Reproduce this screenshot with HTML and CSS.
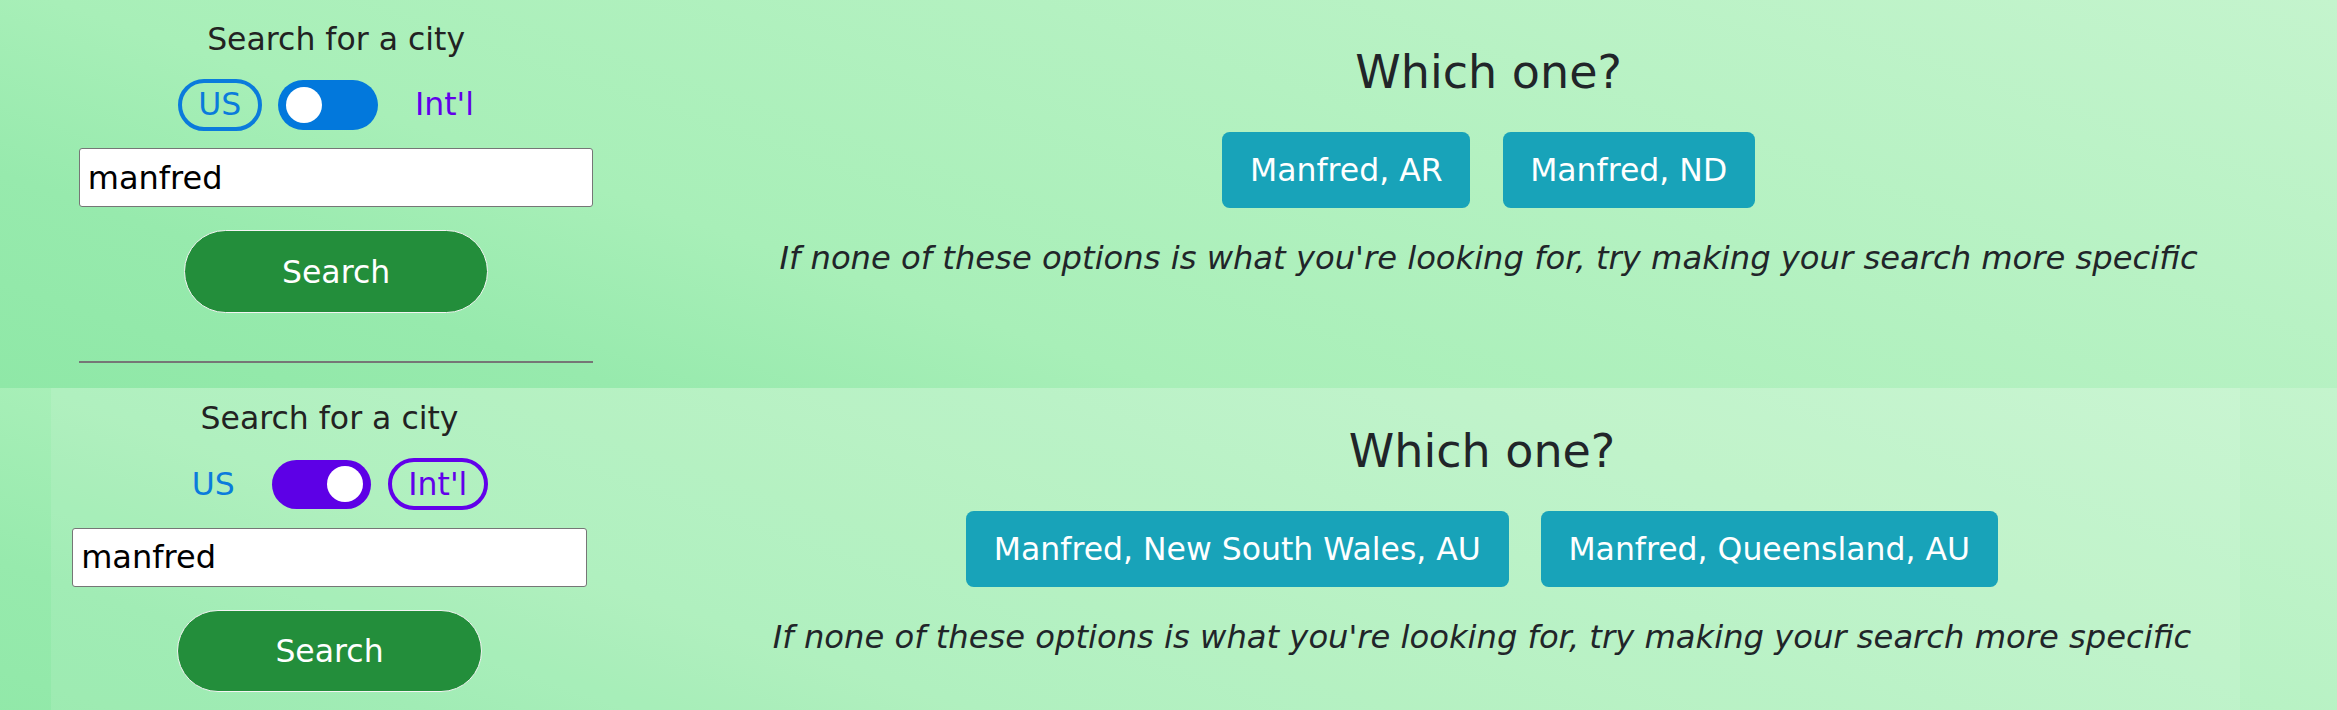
FILE: index.html
```html
<!DOCTYPE html>
<html lang="en">
<head>
<meta charset="utf-8">
<title>City search</title>
<link rel="stylesheet" href="styles.css">
</head>
<body>
<div class="page">
  <section class="result">
    <div class="search-col">
      <h5 class="search-title">Search for a city</h5>
      <div class="mode-row">
        <span class="mode mode-us is-active">US</span>
        <span class="switch switch-us"><span class="knob"></span></span>
        <span class="mode mode-intl">Int'l</span>
      </div>
      <input class="city-input" type="text" value="manfred">
      <button class="search-btn" type="button">Search</button>
      <hr class="divider">
    </div>
    <div class="choices-col">
      <h3 class="which">Which one?</h3>
      <div class="choices">
        <button class="choice" type="button">Manfred, AR</button>
        <button class="choice" type="button">Manfred, ND</button>
      </div>
      <p class="hint">If none of these options is what you're looking for, try making your search more specific</p>
    </div>
  </section>
  <section class="result result-panel">
    <div class="search-col">
      <h5 class="search-title">Search for a city</h5>
      <div class="mode-row">
        <span class="mode mode-us">US</span>
        <span class="switch switch-intl"><span class="knob"></span></span>
        <span class="mode mode-intl is-active">Int'l</span>
      </div>
      <input class="city-input" type="text" value="manfred">
      <button class="search-btn" type="button">Search</button>
      <hr class="divider">
    </div>
    <div class="choices-col">
      <h3 class="which">Which one?</h3>
      <div class="choices">
        <button class="choice" type="button">Manfred, New South Wales, AU</button>
        <button class="choice" type="button">Manfred, Queensland, AU</button>
      </div>
      <p class="hint">If none of these options is what you're looking for, try making your search more specific</p>
    </div>
  </section>
</div>
</body>
</html>
```

FILE: styles.css
```css
html, body {
  margin: 0;
  height: 100%;
  overflow: hidden;
}

html {
  background: linear-gradient(19deg, #8fe8a7 0%, #97eaad 18%, #a8efb8 34%, #c4f4cd 100%);
  background-size: 100% 388px;
  background-repeat: repeat;
}

body {
  font-family: "DejaVu Sans", "Liberation Sans", sans-serif;
  color: #212529;
}

.page {
  padding-top: 8.6px;
}

.result {
  display: grid;
  grid-template-columns: 557px 1fr;
  width: 2189px;
  height: 379.4px;
  margin-left: 57.6px;
}

.result-panel {
  margin-left: 51px;
  height: 420px;
  background: rgba(255, 255, 255, 0.1);
}

/* left column */
.search-col {
  display: flex;
  flex-direction: column;
  align-items: center;
}

.search-title {
  margin: 11.4px 0 0;
  font-size: 31.5px;
  line-height: 38px;
  font-weight: normal;
  color: #222;
}

.mode-row {
  margin-top: 20.9px;
  height: 52px;
  display: flex;
  align-items: center;
  gap: 16.6px;
}

.mode {
  box-sizing: border-box;
  height: 52px;
  padding: 0 16.5px;
  border: 4px solid transparent;
  border-radius: 26px;
  display: flex;
  align-items: center;
  font-size: 31.5px;
  line-height: 1;
}

.mode-us {
  color: #0a7bdc;
}

.mode-us.is-active {
  border-color: #0a7bdc;
}

.mode-intl {
  color: #6200ea;
}

.mode-intl.is-active {
  border-color: #6200ea;
}

.switch {
  position: relative;
  width: 99.4px;
  height: 49.4px;
  border-radius: 25px;
}

.switch-us {
  background: #0278dc;
}

.switch-intl {
  background: #5d00e6;
}

.knob {
  position: absolute;
  top: 6.7px;
  width: 36px;
  height: 36px;
  border-radius: 50%;
  background: #fff;
}

.switch-us .knob {
  left: 7.7px;
}

.switch-intl .knob {
  right: 8px;
}

.city-input {
  margin-top: 17.3px;
  box-sizing: border-box;
  width: 514.7px;
  height: 59px;
  border: 1.5px solid #767676;
  border-radius: 3px;
  padding: 0 8px;
  font-family: "DejaVu Sans", "Liberation Sans", sans-serif;
  font-size: 32px;
  color: #000;
  background: #fff;
  outline: none;
}

.search-btn {
  margin-top: 23px;
  box-sizing: border-box;
  width: 304.3px;
  height: 82.7px;
  border: 1.5px solid #f4f4f4;
  border-radius: 42px;
  background: #238e3b;
  color: #fff;
  font-family: "DejaVu Sans", "Liberation Sans", sans-serif;
  font-size: 31.5px;
  padding: 0;
}

.divider {
  margin: 48.4px 0 0;
  width: 514.7px;
  height: 0;
  border: 0;
  border-top: 2px solid #767676;
}

/* right column */
.choices-col {
  display: flex;
  flex-direction: column;
  align-items: center;
  padding-left: 116px;
}

.which {
  margin: 36.5px 0 0;
  font-size: 46px;
  line-height: 55px;
  font-weight: normal;
  color: #212529;
}

.choices {
  margin-top: 31.9px;
  display: flex;
  gap: 32.3px;
}

.choice {
  box-sizing: border-box;
  height: 75.7px;
  padding: 0 27.6px;
  border: 0;
  border-radius: 7.7px;
  background: #18a3b9;
  color: #fff;
  font-family: "DejaVu Sans", "Liberation Sans", sans-serif;
  font-size: 31.5px;
  white-space: nowrap;
}

.hint {
  margin: 30.9px 0 0;
  font-size: 32.2px;
  line-height: 38px;
  font-style: italic;
  white-space: nowrap;
  color: #212529;
}
```
